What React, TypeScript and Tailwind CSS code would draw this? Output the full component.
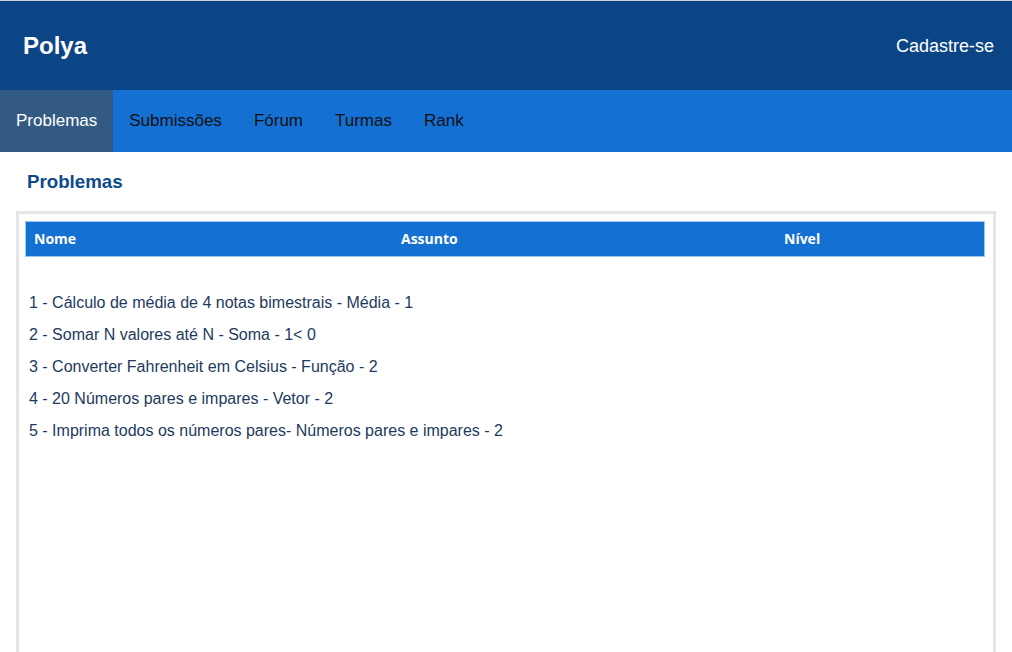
export default function App() {
  const navItems = ["Problemas", "Submissões", "Fórum", "Turmas", "Rank"];
  const problems = [
    "1 - Cálculo de média de 4 notas bimestrais - Média - 1",
    "2 - Somar N valores até N - Soma - 1< 0",
    "3 - Converter Fahrenheit em Celsius - Função - 2",
    "4 - 20 Números pares e impares - Vetor - 2",
    "5 - Imprima todos os números pares- Números pares e impares - 2",
  ];

  return (
    <div className="min-h-[652px] bg-white font-['Liberation_Sans',Arial,sans-serif]">
      <header className="flex h-[90px] items-center justify-between border-t border-[#cfd3d8] bg-[#0c4585] pl-[23px] pr-[18px] text-white">
        <span className="text-2xl font-bold">Polya</span>
        <span className="text-lg">Cadastre-se</span>
      </header>

      <nav className="flex h-[62px] bg-[#1570d3]">
        {navItems.map((item, i) => (
          <a
            key={item}
            className={
              i === 0
                ? "flex items-center bg-[#335a82] px-4 text-[17px] text-white"
                : "flex items-center px-4 text-[17px] text-[#111]"
            }
          >
            {item}
          </a>
        ))}
      </nav>

      <main>
        <h3 className="mt-[16px] pl-[27px] text-[18.72px] font-bold text-[#0d4a8a]">Problemas</h3>

        <div className="mx-[16px] mt-[15px] min-h-[460px] border-[3px] border-[#e6e6e6] pl-[6px] pr-[8px] pt-[7px]">
          <div className="grid h-[36px] grid-cols-[367px_383px_1fr] items-center border border-[#9fc6ef] bg-[#1570d3] font-['Open_Sans',sans-serif] text-sm font-bold text-white">
            <span className="pl-2">Nome</span>
            <span className="pl-2">Assunto</span>
            <span className="pl-2">Nível</span>
          </div>

          <ul className="mt-[30px] pl-[4px] text-base leading-8 text-[#1d3a5e]">
            {problems.map((p) => (
              <li key={p}>{p}</li>
            ))}
          </ul>
        </div>
      </main>
    </div>
  );
}
